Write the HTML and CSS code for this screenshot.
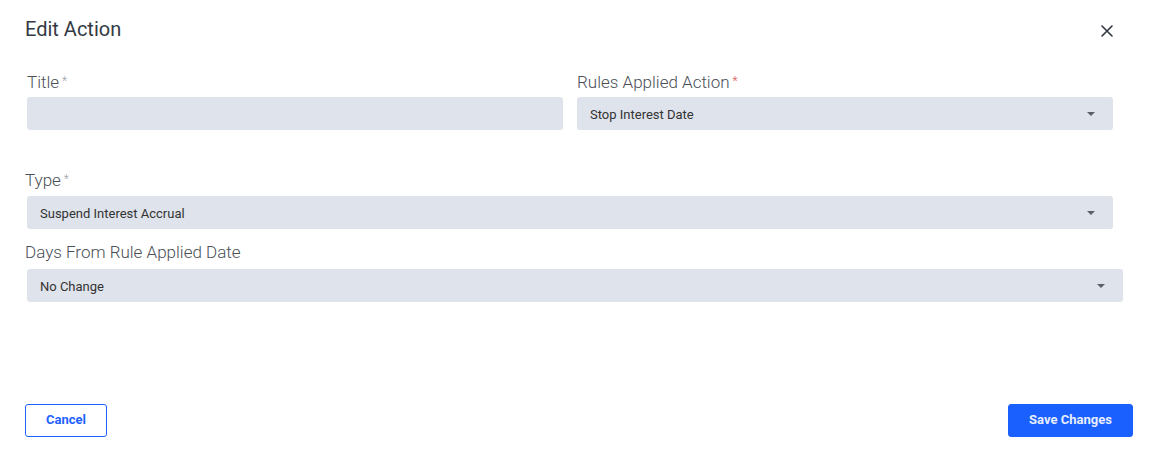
FILE: index.html
```html
<!DOCTYPE html>
<html>
<head>
<meta charset="utf-8">
<link rel="stylesheet" href="styles.css">
</head>
<body>
<div class="dialog">
  <div class="header">
    <h1 class="title">Edit Action</h1>
    <button class="close" aria-label="Close">
      <svg width="12" height="12" viewBox="0 0 12 12"><path d="M1 1L11 11M11 1L1 11" stroke="#2f3640" stroke-width="1.6" stroke-linecap="round"/></svg>
    </button>
  </div>
  <div class="row two">
    <div class="field">
      <label class="label">Title<span class="req">*</span></label>
      <div class="input"></div>
    </div>
    <div class="field">
      <label class="label">Rules Applied Action<span class="req red">*</span></label>
      <div class="input select"><span>Stop Interest Date</span><i class="caret"></i></div>
    </div>
  </div>
  <div class="field type">
    <label class="label">Type<span class="req">*</span></label>
    <div class="input select"><span>Suspend Interest Accrual</span><i class="caret"></i></div>
  </div>
  <div class="field days">
    <label class="label">Days From Rule Applied Date</label>
    <div class="input select"><span>No Change</span><i class="caret"></i></div>
  </div>
  <div class="footer">
    <button class="btn outline">Cancel</button>
    <button class="btn primary">Save Changes</button>
  </div>
</div>
</body>
</html>
```
FILE: styles.css
```css
* { box-sizing: border-box; }
html, body { margin: 0; padding: 0; background: #fff; }
body { font-family: Roboto, "Noto Sans", sans-serif; color: #333; width: 1150px; height: 465px; overflow: hidden; }
.dialog { padding: 17px 17px 0 25px; height: 465px; display: flex; flex-direction: column; }
.header { display: flex; justify-content: space-between; align-items: center; height: 24px; }
.title { margin: 0; font-size: 20px; font-weight: 400; color: #343a44; line-height: 24px; }
.close { border: 0; background: none; padding: 0; margin-right: 20px; margin-top: 4px; width: 12px; height: 12px; display: flex; }
.row.two { display: grid; grid-template-columns: 536px 536px; column-gap: 14px; margin-left: 2px; margin-top: 31px; width: 1086px; }
.field { display: flex; flex-direction: column; }
.label { font-size: 17px; font-weight: 300; color: #4a4f57; line-height: 20px; height: 20px; margin-bottom: 5px; }
.req { color: #a0a4aa; font-size: 12px; margin-left: 3px; vertical-align: top; position: relative; top: -1px; }
.req.red { color: #e05050; }
.input { height: 33px; background: #dfe3eb; border-radius: 3px; display: flex; align-items: center; padding: 1px 13px 0; font-size: 13px; color: #333; }
.field.type .input, .field.days .input { margin-left: 2px; }
.field.type { margin-top: 40px; width: 1088px; }
.field.type .label { margin-bottom: 6px; }
.field.days { margin-top: 13px; width: 1098px; }
.field.days .label { margin-bottom: 7px; }
.select { justify-content: space-between; padding-right: 18px; }
.caret { width: 0; height: 0; border-left: 4.5px solid transparent; border-right: 4.5px solid transparent; border-top: 4.5px solid #5b6068; }
.footer { margin-top: auto; margin-bottom: 28px; display: flex; justify-content: space-between; }
.btn { height: 33px; border-radius: 3px; font-family: Roboto, sans-serif; font-size: 13px; font-weight: 700; cursor: pointer; padding: 0 0 2px; }
.btn.outline { width: 82px; background: #fff; border: 1px solid #1f63ff; color: #1f63ff; }
.btn.primary { width: 125px; background: #1a60ff; border: 1px solid #1a60ff; color: #e8eeff; }
```
